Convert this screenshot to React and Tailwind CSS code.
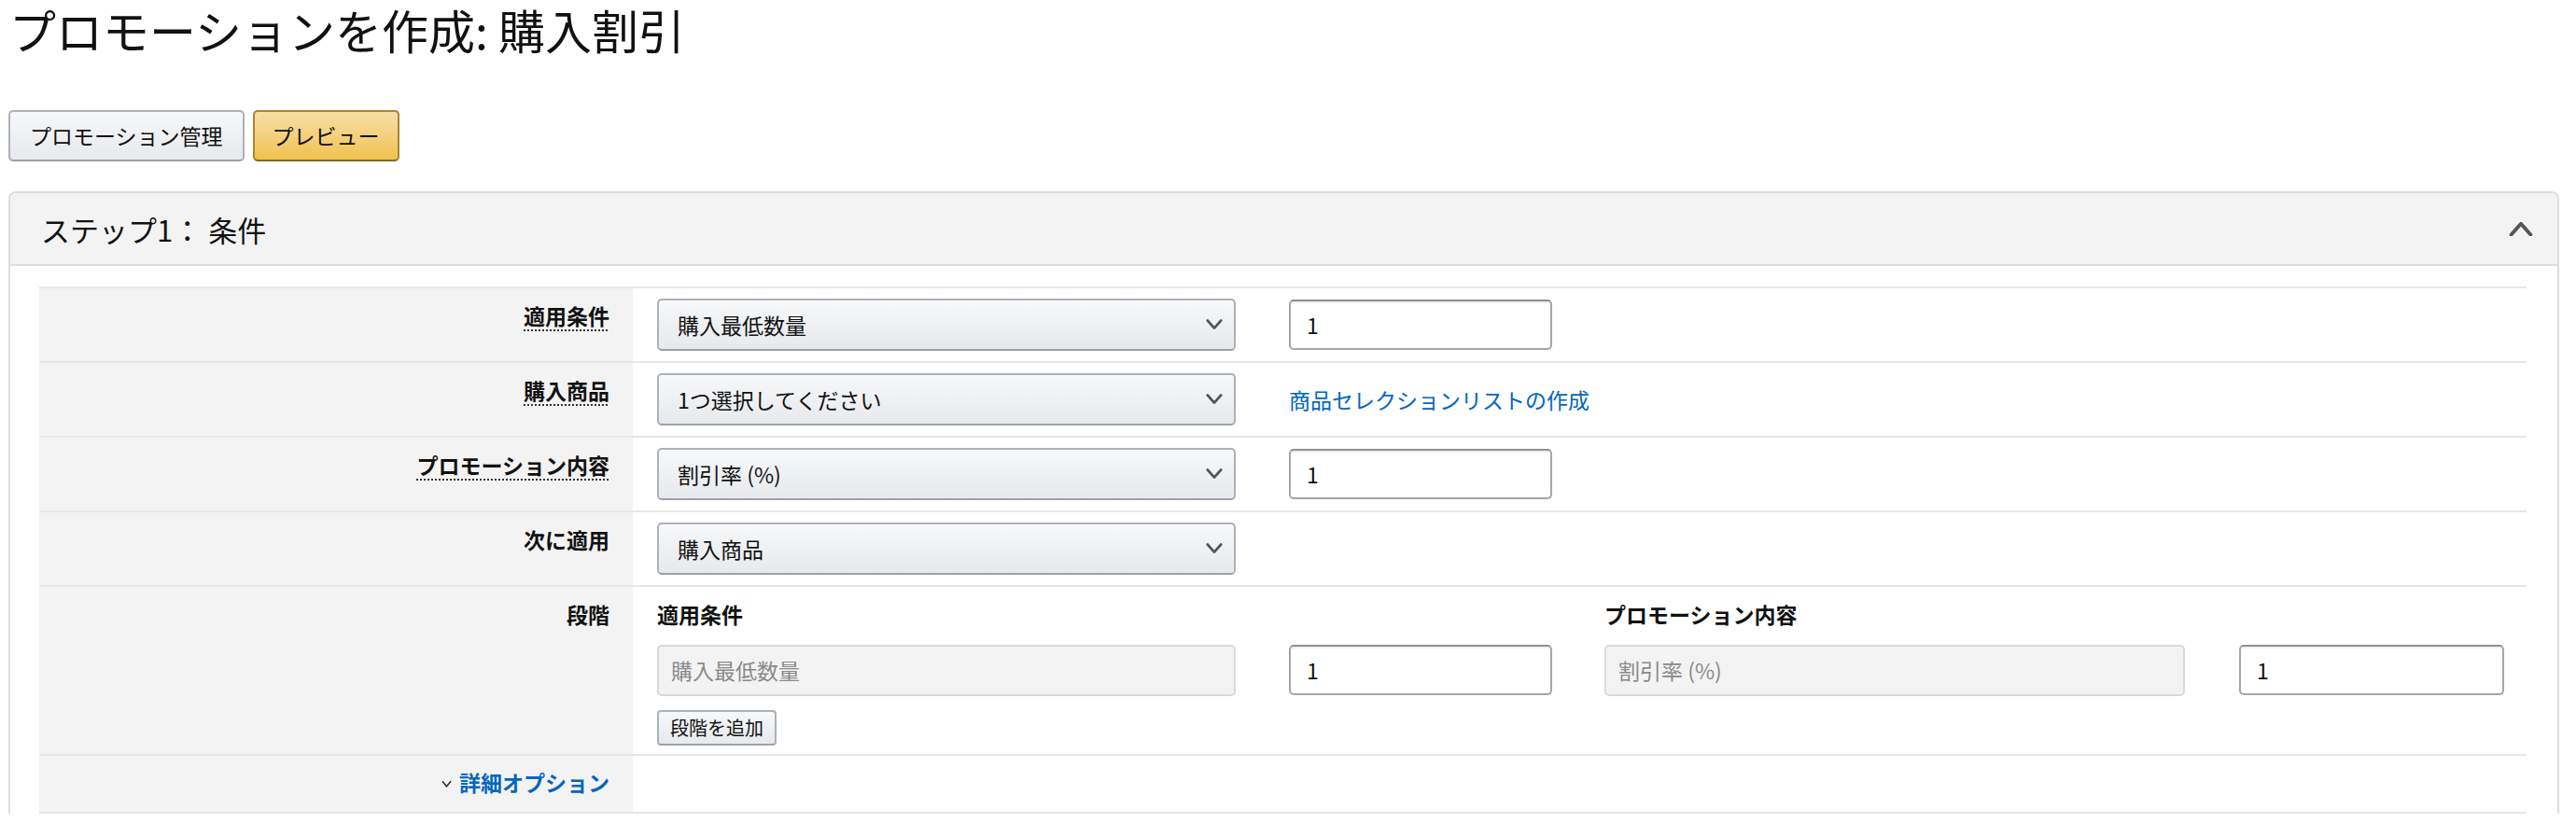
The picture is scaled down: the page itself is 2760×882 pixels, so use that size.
import React from 'react';

const font = "font-['Noto_Sans_CJK_JP','Liberation_Sans',sans-serif]";

function Chevron({ up = false, className = '' }) {
  return (
    <svg viewBox="0 0 20 12" className={className} fill="none">
      <polyline
        points={up ? '2,11 10,2 18,11' : '2,1 10,10 18,1'}
        stroke="#555"
        strokeWidth="3"
        strokeLinecap="round"
        strokeLinejoin="round"
      />
    </svg>
  );
}

function SelectBox({ value }) {
  return (
    <div className="flex h-[56px] w-[620px] items-center justify-between rounded-[5px] border-2 border-[#adb1b8] border-b-[#9ea2a8] bg-linear-to-b from-[#f7f8fa] to-[#e7e9ec] pl-[20px] pr-[12px] text-[23px] text-[#111] shadow-[0_1px_0_rgba(255,255,255,0.6)_inset]">
      <span>{value}</span>
      <Chevron className="h-[12px] w-[18px]" />
    </div>
  );
}

function NumberInput({ w = 'w-[282px]' }) {
  return (
    <input
      readOnly
      defaultValue="1"
      className={`${w} h-[54px] rounded-[5px] border-2 border-[#a6a6a6] border-t-[#8f8f8f] bg-white pl-[17px] text-[23px] text-[#111] shadow-[inset_0_2px_0_rgba(0,0,0,0.06)] outline-none`}
    />
  );
}

function DisabledBox({ value, w = 'w-[620px]' }) {
  return (
    <div className={`${w} flex h-[55px] items-center rounded-[5px] border-2 border-[#dadada] bg-[#f3f3f3] pl-[13px] text-[23px] text-[#8a8a8a]`}>
      {value}
    </div>
  );
}

function Label({ children, dotted }) {
  return (
    <span
      className={
        dotted
          ? 'font-bold underline decoration-dotted decoration-[#333] decoration-[2px] underline-offset-[5px]'
          : 'font-bold'
      }
    >
      {children}
    </span>
  );
}

function Row({ label, dotted, children }) {
  return (
    <div className="grid h-[80px] grid-cols-[636px_1fr] border-t-2 border-[#e7e7e7]">
      <div className="bg-[#f3f3f3] pr-[25px] pt-[12px] text-right text-[23px] leading-[34px] text-[#111]">
        <Label dotted={dotted}>{label}</Label>
      </div>
      <div className="flex items-center gap-[57px] pl-[26px]">{children}</div>
    </div>
  );
}

export default function App() {
  return (
    <div className={`min-h-screen bg-white pl-[9px] text-[#111] ${font}`}>
      <h1 className="pl-[1px] pt-[2px] text-[50px] font-normal leading-[58px] text-[#111]">
        プロモーションを作成: 購入割引
      </h1>

      <div className="mt-[58px] flex gap-[9px]">
        <button className="h-[55px] rounded-[5px] border-2 border-[#adb1b8] border-b-[#9ea2a8] bg-linear-to-b from-[#f7f8fa] to-[#e7e9ec] px-[21px] text-[23px] text-[#111]">
          プロモーション管理
        </button>
        <button className="h-[55px] rounded-[5px] border-2 border-[#a88734] border-b-[#846a29] bg-linear-to-b from-[#f7dfa5] to-[#f0c14b] px-[19px] text-[23px] text-[#111]">
          プレビュー
        </button>
      </div>

      <div className="mr-[18px] mt-[32px] rounded-t-[8px] border-2 border-b-0 border-[#dddddd]">
        <div className="flex h-[78px] items-center justify-between rounded-t-[7px] border-b-2 border-[#dddddd] bg-[#f3f3f3] pl-[33px] pr-[26px]">
          <span className="text-[31px] leading-[45px] text-[#111]">ステップ1： 条件</span>
          <Chevron up className="h-[16px] w-[26px]" />
        </div>

        <div className="pl-[31px] pr-[33px] pt-[22px]">
          <Row label="適用条件" dotted>
            <SelectBox value="購入最低数量" />
            <NumberInput />
          </Row>
          <Row label="購入商品" dotted>
            <SelectBox value="1つ選択してください" />
            <a href="#" className="text-[23px] text-[#0066c0]">
              商品セレクションリストの作成
            </a>
          </Row>
          <Row label="プロモーション内容" dotted>
            <SelectBox value="割引率 (%)" />
            <NumberInput />
          </Row>
          <Row label="次に適用">
            <SelectBox value="購入商品" />
          </Row>

          <div className="grid h-[181px] grid-cols-[636px_1fr] border-t-2 border-[#e7e7e7]">
            <div className="bg-[#f3f3f3] pr-[25px] pt-[12px] text-right text-[23px] leading-[34px]">
              <Label>段階</Label>
            </div>
            <div className="pl-[26px] pt-[12px]">
              <div className="flex gap-[56px]">
                <div>
                  <div className="text-[23px] font-bold leading-[34px]">適用条件</div>
                  <div className="mt-[16px] flex gap-[57px]">
                    <DisabledBox value="購入最低数量" />
                    <NumberInput />
                  </div>
                </div>
                <div>
                  <div className="text-[23px] font-bold leading-[34px]">プロモーション内容</div>
                  <div className="mt-[16px] flex gap-[58px]">
                    <DisabledBox value="割引率 (%)" w="w-[622px]" />
                    <NumberInput w="w-[284px]" />
                  </div>
                </div>
              </div>
              <button className="mt-[15px] h-[38px] rounded-[4px] border-2 border-[#adb1b8] border-b-[#9ea2a8] bg-linear-to-b from-[#f7f8fa] to-[#e7e9ec] px-[12px] text-[20px] leading-[30px] text-[#111]">
                段階を追加
              </button>
            </div>
          </div>

          <div className="grid h-[64px] grid-cols-[636px_1fr] border-y-2 border-[#e7e7e7]">
            <div className="flex items-start justify-end gap-[8px] bg-[#f3f3f3] pr-[25px] pt-[11px] text-[23px] leading-[34px]">
              <svg viewBox="0 0 12 8" className="mt-[15px] h-[8px] w-[11px]" fill="none">
                <polyline points="1,1 6,7 11,1" stroke="#333" strokeWidth="1.8" />
              </svg>
              <a href="#" className="font-bold text-[#0066c0]">
                詳細オプション
              </a>
            </div>
            <div />
          </div>
        </div>
      </div>
    </div>
  );
}
